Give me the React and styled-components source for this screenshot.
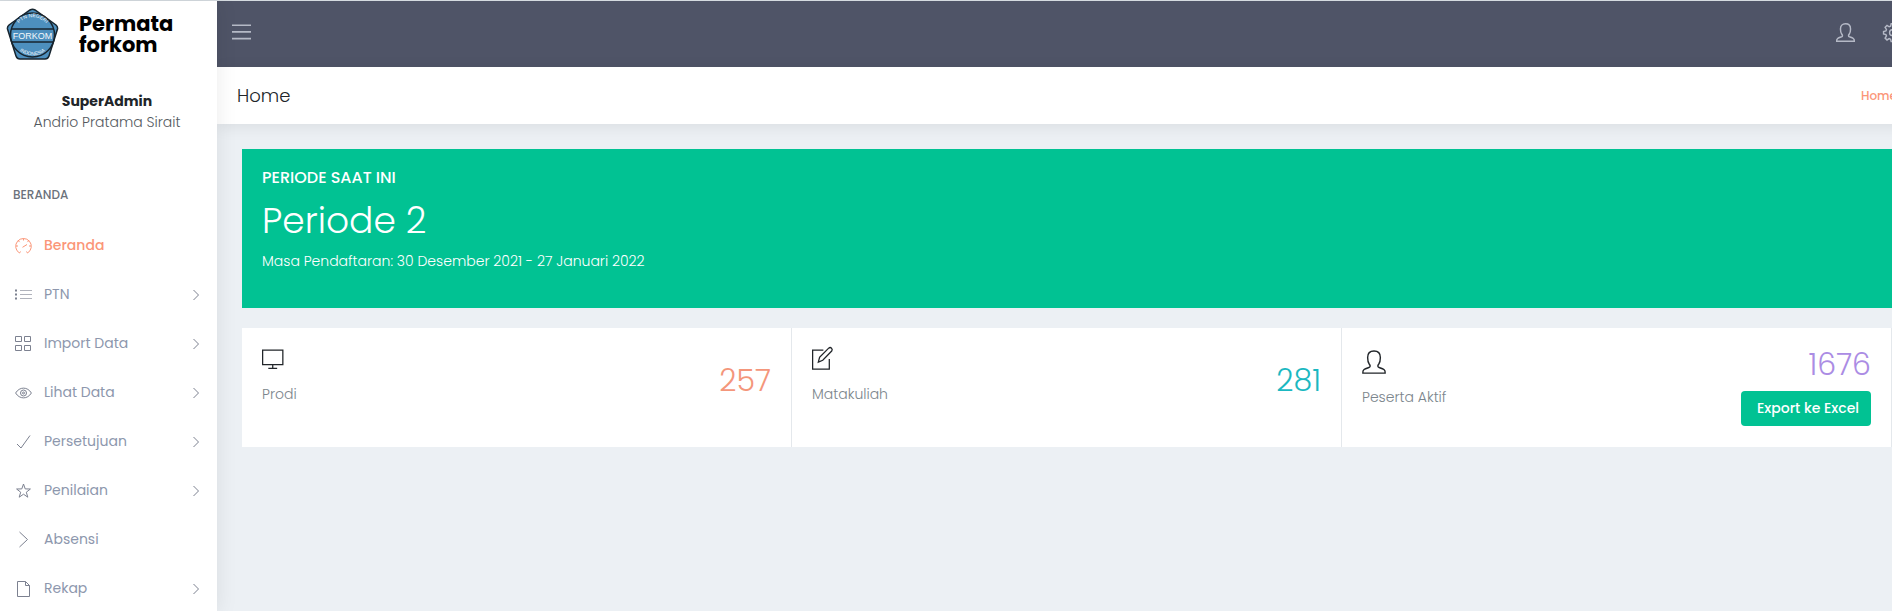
import React from "react";
import styled, { createGlobalStyle } from "styled-components";

const Global = createGlobalStyle`
  *, *::before, *::after { box-sizing: border-box; }
  body {
    margin: 0;
    overflow-x: hidden;
    background: #ecf0f4;
    color: #212529;
    font-family: Poppins, Inter, "Liberation Sans", sans-serif;
    font-size: 14px;
    font-weight: 300;
    line-height: 21px;
  }
  h1, h2, p, ul { margin: 0; padding: 0; }
  a { color: inherit; text-decoration: none; }
`;

const Page = styled.div`
  display: flex;
  width: calc(100% + 26px);
  min-height: 100vh;
  border-top: 1px solid #d5dbe0;
`;

const Sidebar = styled.aside`
  position: relative;
  z-index: 1;
  flex: 0 0 217px;
  background: #fff;
  box-shadow: 1px 0 20px rgba(0, 0, 0, 0.08);
`;

const Brand = styled.a`
  display: flex;
  align-items: center;
  gap: 20px;
  height: 66px;
  padding-left: 6px;
  color: #000;
  font-size: 21px;
  font-weight: 700;
  line-height: 21px;
`;

const Profile = styled.div`
  padding: 24px 3px 0 0;
  text-align: center;
  color: #54595e;
`;

const Role = styled.p`
  color: #212529;
  font-weight: 700;
`;

const MenuTitle = styled.h2`
  padding: 52px 0 0 13px;
  color: #6b727c;
  font-size: 12px;
  font-weight: 500;
  line-height: 20px;
`;

const Menu = styled.ul`
  margin-top: 16px;
  list-style: none;
`;

const MenuLink = styled.a`
  display: flex;
  align-items: center;
  gap: 12px;
  height: 49px;
  padding: 0 17px 0 15px;
  color: ${(p) => (p.$active ? "#fb9678" : "#8d97ad")};
  font-weight: ${(p) => (p.$active ? 500 : 400)};

  svg { color: ${(p) => (p.$active ? "#fb9678" : "#7c8190")}; }
`;

const MenuLabel = styled.span`
  flex: 1;
`;

const Main = styled.main`
  flex: 1;
  min-width: 0;
`;

const Topbar = styled.header`
  display: flex;
  align-items: center;
  justify-content: space-between;
  height: 66px;
  padding: 0 16px 4px 15px;
  background: #4f5467;
  color: #b5b9c6;
`;

const Tools = styled.div`
  display: flex;
  gap: 28px;
`;

const IconButton = styled.button`
  display: flex;
  padding: 0;
  border: 0;
  background: none;
  color: inherit;
`;

const Titlebar = styled.div`
  display: flex;
  align-items: center;
  justify-content: space-between;
  height: 57px;
  padding: 0 21px 0 20px;
  background: #fff;
  box-shadow: 0 3px 15px rgba(0, 0, 0, 0.08);
`;

const Title = styled.h1`
  font-size: 18px;
  font-weight: 300;
`;

const Crumb = styled.a`
  color: #fb9678;
  font-size: 12px;
  font-weight: 500;
`;

const Content = styled.div`
  display: grid;
  gap: 20px;
  padding: 25px 26px 25px 25px;
`;

const Banner = styled.section`
  height: 159px;
  padding: 18px 20px;
  background: #01c293;
  color: #fff;
`;

const BannerTitle = styled.h2`
  font-size: 16px;
  font-weight: 500;
  line-height: 22px;
`;

const Period = styled.p`
  padding: 10px 0 8px;
  font-size: 36px;
  font-weight: 300;
  line-height: 44px;
`;

const Cards = styled.section`
  display: grid;
  grid-template-columns: repeat(3, 1fr);
`;

const Card = styled.article`
  display: flex;
  align-items: flex-start;
  justify-content: space-between;
  height: 119px;
  padding: 19px 20px;
  border-right: 1px solid #e4e8ec;
  background: #fff;
`;

const CardInfo = styled.div`
  display: grid;
  gap: 13px;
  padding-top: ${(p) => (p.$low ? 3 : 0)}px;
  color: #7b858c;

  svg { color: #212529; }
`;

const Figure = styled.div`
  display: grid;
  justify-items: end;
  gap: 8px;
  padding-top: ${(p) => (p.$low ? 16 : 0)}px;
`;

const Count = styled.p`
  color: ${(p) => p.$color};
  font-size: 30px;
  font-weight: 300;
  line-height: 36px;
`;

const ExportButton = styled.button`
  height: 35px;
  padding: 0 12px 0 16px;
  border: 0;
  border-radius: 4px;
  background: #01c293;
  color: #fff;
  font: inherit;
  font-weight: 500;
`;

const shapes = {
  menu: <path d="M0 2h17M0 8h17M0 14h17" />,
  dashboard: (
    <>
      <path d="M4.500 16A7.800 7.800 0 1 1 12.500 16" />
      <path d="M7.500 10.300l4.500-2.800M8.500 1.500v2M1 9h2M14 9h2M3.200 3.700l1.400 1.400M13.800 3.700l-1.400 1.400M4.500 16l1-1.500M12.500 16l-1-1.500" />
    </>
  ),
  list: (
    <>
      <path d="M5 4.500h12M5 8.500h12M5 12.500h12" opacity="0.6" />
      <path d="M0 4.500h2M0 8.500h2M0 12.500h2" strokeWidth="2" />
    </>
  ),
  grid: <path d="M.5 1.500h6v5h-6zM9.500 1.500h6v5h-6zM.5 10.500h6v5h-6zM9.500 10.500h6v5h-6z" />,
  eye: (
    <>
      <path d="M.6 9C4.500 2.500 12.500 2.500 16.400 9C12.500 15.500 4.500 15.500.6 9z" />
      <circle cx="8.500" cy="9" r="3" />
      <circle cx="8.500" cy="9" r="1" />
    </>
  ),
  check: <path d="M2 11l4 4L15 2.500" />,
  star: <path d="M8.500 2l1.700 4.900 5.200.1-4.100 3.200 1.500 5-4.300-3-4.300 3 1.500-5L1.600 7l5.200-.1z" />,
  right: <path d="M4.500 1l8 7.500-8 7.500" />,
  file: <path d="M2.500 1.500h8l4 4v11h-12zM10.500 1.500v4h4" />,
  user: <path d="M.6 16.400c-.3-2.700 1.500-3.100 4.300-4 1.300-.4 1-1.500.2-2.500C4.300 8.800 4 7.200 4 5.300 4 2.400 5.600.7 8.500.7S13 2.400 13 5.300c0 1.900-.3 3.500-1.100 4.600-.8 1-1.100 2.100.2 2.500 2.800.9 4.600 1.300 4.300 4z" />,
  gear: (
    <>
      <path d="M7.300.7h2.400l.5 2.200 1.300.5 1.900-1.200 1.700 1.700-1.200 1.900.5 1.300 2.100.5v2.200l-2.100.5-.5 1.300 1.200 1.900-1.700 1.700-1.900-1.200-1.300.5-.5 2.100H7.300l-.5-2.100-1.300-.5-1.900 1.200-1.700-1.700 1.200-1.900-.5-1.300L.5 9.800V7.600l2.100-.5.5-1.300-1.200-1.900 1.700-1.700 1.900 1.200 1.300-.5z" />
      <circle cx="8.500" cy="8.700" r="2.600" />
    </>
  ),
  desktop: <path d="M.5 2.500h16v11.500H.5zM8.500 14v3M5 17h7" />,
  pencil: <path d="M9 2.500H.5v15h13.200V9.500M5 12l1-3.800L13.200.9c1.600-1.300 3.600.6 2.400 2.300L8.500 10.500z" />,
};

const Icon = ({ name, size = 17, width = 1, box = 17 }) => (
  <svg width={size} height={size} viewBox={`0 0 ${box} ${box}`} overflow="visible" fill="none" stroke="currentColor" strokeWidth={width} aria-hidden="true">
    {shapes[name]}
  </svg>
);

const Chevron = () => (
  <svg width="8" height="12" viewBox="0 0 8 12" fill="none" stroke="currentColor" aria-hidden="true">
    <path d="M1.500 1l5 5-5 5" />
  </svg>
);

const LogoText = styled.text`
  font-family: "Liberation Sans", sans-serif;
  font-weight: 400;
  fill: #f2f7fa;
  text-anchor: middle;
`;

const Logo = () => (
  <svg width="53" height="52" viewBox="0 0 53 52" role="img" aria-label="FORKOM">
    <defs>
      <path id="logo-top" d="M10 20A18 18 0 0 1 43 20" />
      <path id="logo-bottom" d="M9 38A21 21 0 0 0 44 38" />
    </defs>
    <path d="M24 2q2.500-1.500 5 0l21 15q2 2 1.500 4L43 48q-1 3-4 3H14q-3 0-4-3L1.500 21q-.5-2 1.500-4z" fill="#4d8fbe" stroke="#17252f" strokeWidth="1.500" />
    <circle cx="26.500" cy="27" r="22" fill="none" stroke="#17252f" strokeWidth="1.500" />
    <path d="M5 21h43M5 34h43" stroke="#17252f" strokeWidth="1.500" />
    <LogoText x="26.500" y="31" fontSize="9">FORKOM</LogoText>
    <LogoText fontSize="5"><textPath href="#logo-top" startOffset="50%">PTN NEGERI</textPath></LogoText>
    <LogoText fontSize="5"><textPath href="#logo-bottom" startOffset="50%">INDONESIA</textPath></LogoText>
  </svg>
);

const items = [
  ["Beranda", "dashboard", false],
  ["PTN", "list", true],
  ["Import Data", "grid", true],
  ["Lihat Data", "eye", true],
  ["Persetujuan", "check", true],
  ["Penilaian", "star", true],
  ["Absensi", "right", false],
  ["Rekap", "file", true],
];

export default function App() {
  return (
    <Page>
      <Global />
      <Sidebar>
        <Brand href="#">
          <Logo />
          <span>Permata<br />forkom</span>
        </Brand>
        <Profile>
          <Role>SuperAdmin</Role>
          <p>Andrio Pratama Sirait</p>
        </Profile>
        <nav>
          <MenuTitle>BERANDA</MenuTitle>
          <Menu>
            {items.map(([label, icon, expands]) => (
              <li key={label}>
                <MenuLink href="#" $active={label === "Beranda"}>
                  <Icon name={icon} />
                  <MenuLabel>{label}</MenuLabel>
                  {expands && <Chevron />}
                </MenuLink>
              </li>
            ))}
          </Menu>
        </nav>
      </Sidebar>
      <Main>
        <Topbar>
          <IconButton aria-label="Menu"><Icon name="menu" size={19} width={1.5} /></IconButton>
          <Tools>
            <IconButton aria-label="Profile"><Icon name="user" size={19} width={1.3} /></IconButton>
            <IconButton aria-label="Settings"><Icon name="gear" size={19} width={1.3} /></IconButton>
          </Tools>
        </Topbar>
        <Titlebar>
          <Title>Home</Title>
          <Crumb href="#">Home</Crumb>
        </Titlebar>
        <Content>
          <Banner>
            <BannerTitle>PERIODE SAAT INI</BannerTitle>
            <Period>Periode 2</Period>
            <p>Masa Pendaftaran: 30 Desember 2021 - 27 Januari 2022</p>
          </Banner>
          <Cards>
            <Card>
              <CardInfo><Icon name="desktop" size={24} box={19} /><p>Prodi</p></CardInfo>
              <Figure $low><Count $color="#f4967b">257</Count></Figure>
            </Card>
            <Card>
              <CardInfo><Icon name="pencil" size={24} box={19} /><p>Matakuliah</p></CardInfo>
              <Figure $low><Count $color="#1bb8c1">281</Count></Figure>
            </Card>
            <Card>
              <CardInfo $low><Icon name="user" size={24} /><p>Peserta Aktif</p></CardInfo>
              <Figure>
                <Count $color="#ab8ce4">1676</Count>
                <ExportButton>Export ke Excel</ExportButton>
              </Figure>
            </Card>
          </Cards>
        </Content>
      </Main>
    </Page>
  );
}
